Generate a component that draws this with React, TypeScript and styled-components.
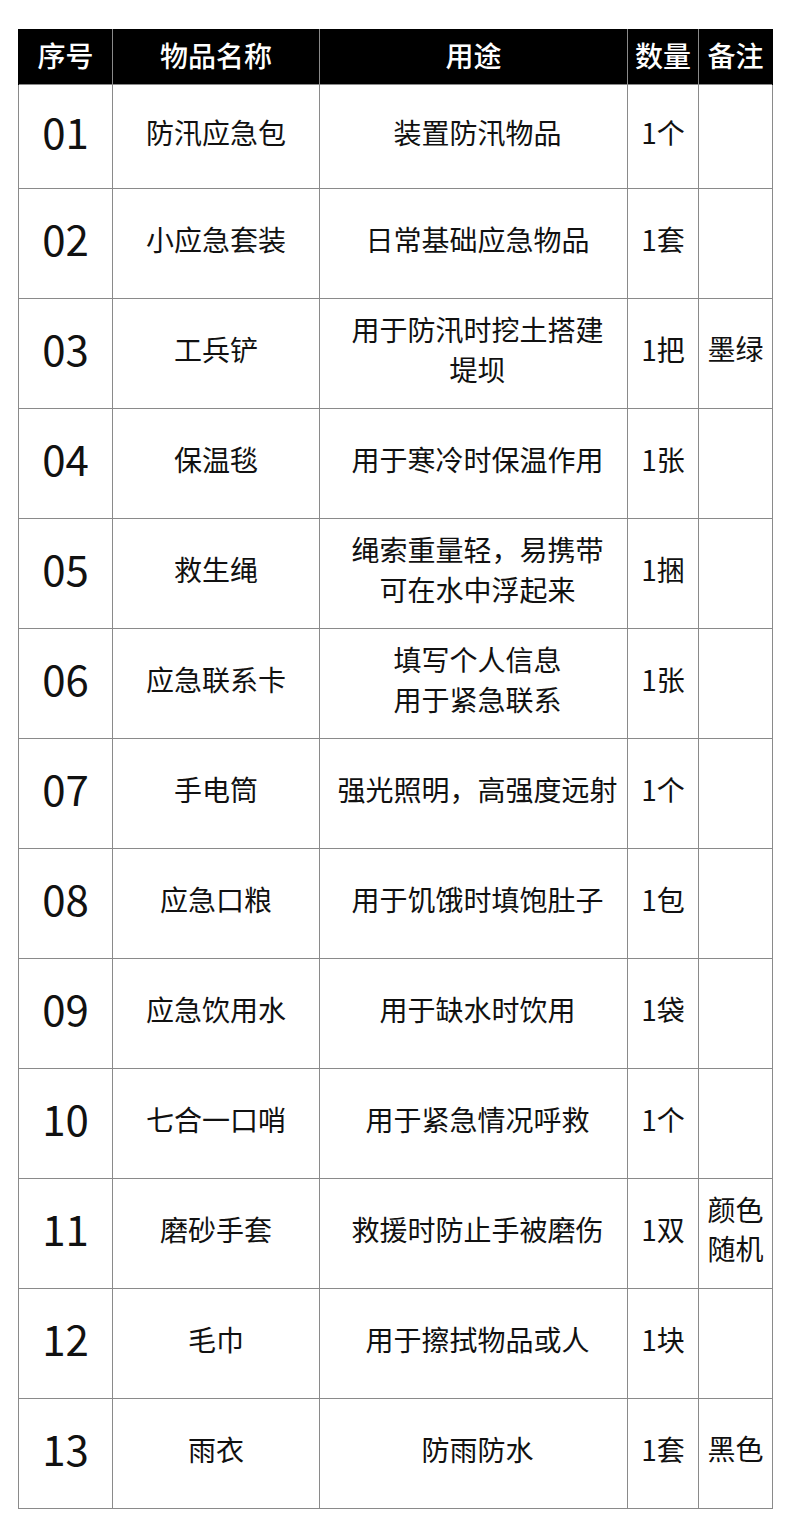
import React from "react";
import styled, { createGlobalStyle } from "styled-components";

const Global = createGlobalStyle`
  html, body { margin: 0; padding: 0; background: #fff; }
  body { font-family: "Noto Sans CJK SC", "Noto Sans", sans-serif; color: #111; }
`;

const Page = styled.div`
  width: 790px;
  height: 1530px;
  padding: 29px 0 0 18px;
  box-sizing: border-box;
`;

const Table = styled.table`
  border-collapse: collapse;
  table-layout: fixed;
  width: 754px;
`;

const HeadCell = styled.th<{ $w: number }>`
  width: ${(p) => p.$w}px;
  height: 55px;
  padding: 0 0 4px 0;
  background: #000;
  color: #fff;
  font-size: 28px;
  font-weight: 500;
  text-align: center;
  vertical-align: middle;
  border-left: 1px solid #8a8a8a;
  border-right: 1px solid #8a8a8a;
  border-top: 1px solid #000;
  line-height: 1;
  box-sizing: border-box;
  &:first-child { border-left-color: #000; }
  &:last-child { border-right-color: #000; }
`;

const Row = styled.tr<{ $h: number }>`
  height: ${(p) => p.$h}px;
`;

const Cell = styled.td`
  padding: 0 0 10px 0;
  border: 1px solid #8a8a8a;
  text-align: center;
  vertical-align: middle;
  font-size: 28px;
  line-height: 40px;
  font-weight: 400;
  color: #111;
`;

const NumCell = styled(Cell)`
  font-size: 42px;
  font-weight: 400;
  line-height: 1;
  padding-bottom: 12px;
`;

const UseCell = styled(Cell)`
  padding-left: 8px;
`;

const NoteCell = styled(Cell)`
  padding-left: 6px;
  padding-right: 6px;
  line-height: 39px;
`;

type Item = {
  no: string;
  name: string;
  use: string[];
  qty: string;
  note: string;
};

const items: Item[] = [
  { no: "01", name: "防汛应急包", use: ["装置防汛物品"], qty: "1个", note: "" },
  { no: "02", name: "小应急套装", use: ["日常基础应急物品"], qty: "1套", note: "" },
  { no: "03", name: "工兵铲", use: ["用于防汛时挖土搭建", "堤坝"], qty: "1把", note: "墨绿" },
  { no: "04", name: "保温毯", use: ["用于寒冷时保温作用"], qty: "1张", note: "" },
  { no: "05", name: "救生绳", use: ["绳索重量轻，易携带", "可在水中浮起来"], qty: "1捆", note: "" },
  { no: "06", name: "应急联系卡", use: ["填写个人信息", "用于紧急联系"], qty: "1张", note: "" },
  { no: "07", name: "手电筒", use: ["强光照明，高强度远射"], qty: "1个", note: "" },
  { no: "08", name: "应急口粮", use: ["用于饥饿时填饱肚子"], qty: "1包", note: "" },
  { no: "09", name: "应急饮用水", use: ["用于缺水时饮用"], qty: "1袋", note: "" },
  { no: "10", name: "七合一口哨", use: ["用于紧急情况呼救"], qty: "1个", note: "" },
  { no: "11", name: "磨砂手套", use: ["救援时防止手被磨伤"], qty: "1双", note: "颜色随机" },
  { no: "12", name: "毛巾", use: ["用于擦拭物品或人"], qty: "1块", note: "" },
  { no: "13", name: "雨衣", use: ["防雨防水"], qty: "1套", note: "黑色" },
];

const cols = [
  { label: "序号", w: 94 },
  { label: "物品名称", w: 207 },
  { label: "用途", w: 308 },
  { label: "数量", w: 71 },
  { label: "备注", w: 74 },
];

export default function App() {
  return (
    <>
      <Global />
      <Page>
        <Table>
          <thead>
            <tr>
              {cols.map((c) => (
                <HeadCell key={c.label} $w={c.w}>
                  {c.label}
                </HeadCell>
              ))}
            </tr>
          </thead>
          <tbody>
            {items.map((it, i) => (
              <Row key={it.no} $h={i === 0 ? 104 : 110}>
                <NumCell>{it.no}</NumCell>
                <Cell>{it.name}</Cell>
                <UseCell>
                  {it.use.map((l, j) => (
                    <React.Fragment key={j}>
                      {j > 0 && <br />}
                      {l}
                    </React.Fragment>
                  ))}
                </UseCell>
                <Cell>{it.qty}</Cell>
                <NoteCell>{it.note}</NoteCell>
              </Row>
            ))}
          </tbody>
        </Table>
      </Page>
    </>
  );
}
